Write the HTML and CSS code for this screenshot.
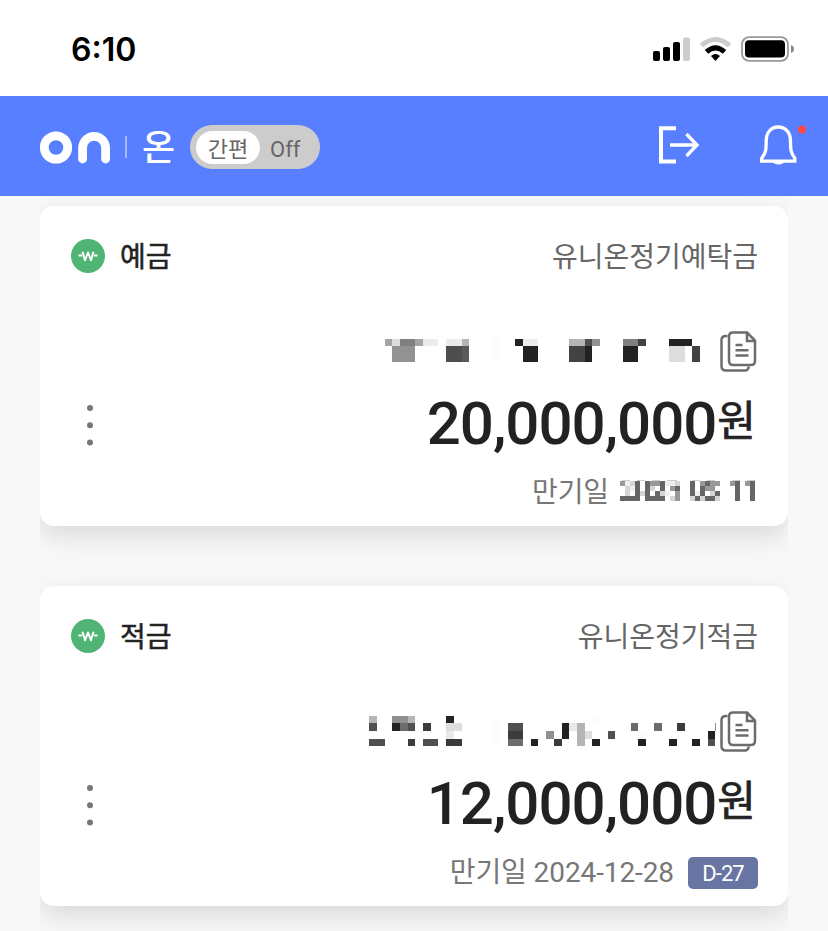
FILE: index.html
```
<!DOCTYPE html>
<html lang="ko">
<head>
  <meta charset="utf-8">
  <title>ON 온</title>
  <link rel="stylesheet" href="styles.css">
</head>
<body>

  <div class="status">
    <span class="time">6:10</span>
    <svg class="status-icons" width="144" height="30" viewBox="652 34 144 30">
      <rect x="653" y="51" width="7" height="10" rx="2"/>
      <rect x="663" y="47" width="7" height="14" rx="2"/>
      <rect x="673" y="42" width="7" height="19" rx="2"/>
      <rect x="683" y="37.500" width="7" height="23.500" rx="2" fill="#ccc"/>
      <g fill="none" stroke-width="5">
        <path d="M701.500 45.500q14-12 28 0" stroke="#ccc"/>
        <path d="M706.500 51.800q9-8 18 0" stroke="#000"/>
      </g>
      <path d="M711 56q4.500-4 9 0l-4.500 5z"/>
      <rect x="742" y="37.200" width="46" height="23.600" rx="7" fill="none" stroke="#999" stroke-width="1.800"/>
      <rect x="745" y="40.200" width="40" height="17.200" rx="4"/>
      <path d="M791 45q3 1.200 3 4t-3 4z" fill="#888"/>
    </svg>
  </div>

  <header class="appbar">
    <svg class="logo" width="70" height="34" viewBox="40 130 70 34">
      <g fill="none" stroke="#fff" stroke-width="8.800" stroke-linecap="round">
        <circle cx="56" cy="147.500" r="11.700"/>
        <path d="M82.600 159v-11a11.500 11.700 0 0 1 23 0v11"/>
      </g>
    </svg>
    <span class="divider"></span>
    <span class="brand">온</span>
    <div class="toggle">
      <span class="knob">간편</span>
      <span class="off">Off</span>
    </div>
    <svg class="actions" width="152" height="44" viewBox="656 123 152 44">
      <g fill="none" stroke="#fff">
        <path d="M676 128.200h-15v33.300h15" stroke-width="4"/>
        <path d="M670 145h26M686.500 134l10.500 11-10.500 11" stroke-width="3.300"/>
        <path d="M761.700 161.200v-3c4-5 4.500-8 4.500-17 0-9 5-14.200 12-14.200s12.300 5.200 12.300 14.200c0 9 .5 12 4.300 17v3z" stroke-width="3.300"/>
      </g>
      <path d="M772.500 161.500h12q-1.500 3-6 3t-6-3z" fill="#fff"/>
      <circle cx="802" cy="129.500" r="4" fill="#ff4646"/>
    </svg>
  </header>

  <main class="accounts">

    <div class="slot">
      <section class="card">
        <div class="row head">
          <svg class="won" width="34" height="34" viewBox="0 0 34 34">
            <circle cx="17" cy="17" r="17" fill="#50b574"/>
            <path d="M7.500 16.500h3.500M23 16.500h3.500M11.500 12.800l2.500 8.400L17 13.500l3 7.700 2.500-8.400" fill="none" stroke="#fff" stroke-width="2" stroke-linejoin="round"/>
          </svg>
          <h2>예금</h2>
          <span class="product">유니온정기예탁금</span>
        </div>
        <div class="row number">
          <svg class="mosaic" width="390" height="50" viewBox="368 326 390 50" shape-rendering="crispEdges">
            <path fill="#a5a5a5" d="M385 339h7v7h-7zM415 339h8v7h-8z"/>
            <path fill="#ddd" d="M392 339h8v7h-8zM669 346h16v16h-16z"/>
            <path fill="#808080" d="M400 339h15v7h-15zM623 339h15v7h-15z"/>
            <path fill="#ececec" d="M423 339h15v7h-15zM446 339h16v7h-16zM523 339h15v7h-15z"/>
            <path fill="#929292" d="M392 346h23v16h-23zM592 339h8v7h-8z"/>
            <path fill="#b5b5b5" d="M462 339h7v7h-7zM569 339h16v7h-16z"/>
            <path fill="#4e4e4e" d="M446 346h16v16h-16zM585 339h7v7h-7z"/>
            <path fill="#5a5a5a" d="M462 346h7v16h-7z"/>
            <path fill="#fcfcfc" d="M492 339h8v23h-8z"/>
            <path fill="#222" d="M515 339h8v7h-8zM523 346h15v16h-15zM585 346h7v16h-7zM623 346h15v16h-15zM669 339h23v7h-23z"/>
            <path fill="#424242" d="M569 346h16v16h-16zM638 339h8v7h-8zM692 346h8v16h-8z"/>
            <g fill="none" stroke="#6c6c6c" stroke-width="2.500" shape-rendering="auto">
              <path d="M727.500 336h-1.500q-4.500 0-4.500 4v26q0 4.500 4.500 4.500h19q3 0 4-4"/>
              <path d="M733 332.500h14l8 8v20q0 4.500-4 4.500h-18q-4 0-4-4.500v-24q0-4 4-4zM747 333v8h8M735.500 345h7M735.500 350.300h13M735.500 355.500h13"/>
            </g>
          </svg>
        </div>
        <div class="row money">
          <svg class="more" width="8" height="44" viewBox="0 0 8 44" fill="#777">
            <circle cx="4" cy="5" r="3"/><circle cx="4" cy="22.300" r="3"/><circle cx="4" cy="39.600" r="3"/>
          </svg>
          <span class="amount">20,000,000<small>원</small></span>
        </div>
        <div class="row due">
          <span class="date">만기일</span>
          <svg class="date-mosaic" width="138" height="24" viewBox="620 479 138 24" shape-rendering="crispEdges">
            <path fill="#ccc" d="M622 480h8v1h-8zM637 480h8v1h-8zM652 480h8v1h-8zM667 480h10v1h-10zM692 480h8v1h-8zM707 480h8v1h-8zM732 480h8v1h-8zM747 480h8v1h-8z"/>
            <path fill="#666" d="M635 481h5v15h-5zM645 481h5v20h-5zM660 481h5v10h-5zM655 491h5v5h-5zM620 496h20v5h-20zM650 496h15v5h-15zM675 486h5v5h-5zM690 481h5v15h-5zM705 481h5v5h-5zM700 486h5v10h-5zM695 496h5v5h-5zM705 496h10v5h-10zM715 491h5v5h-5zM735 481h5v20h-5zM750 481h5v20h-5z"/>
            <path fill="#999" d="M620 481h5v5h-5zM650 481h5v5h-5zM655 481h5v5h-5zM670 486h5v5h-5zM675 491h5v5h-5zM675 496h5v5h-5zM700 481h5v5h-5zM710 481h5v5h-5zM715 481h5v5h-5zM705 486h5v5h-5zM710 486h5v5h-5zM730 481h5v5h-5zM745 481h5v5h-5z"/>
            <path fill="#d5d5d5" d="M625 486h5v10h-5zM630 481h5v5h-5zM640 491h5v5h-5zM650 486h5v5h-5zM660 491h5v5h-5zM675 481h5v5h-5zM670 496h5v5h-5zM690 496h5v5h-5zM700 496h5v5h-5zM710 491h5v5h-5zM715 496h5v5h-5z"/>
            <path fill="#eee" d="M625 481h5v5h-5zM630 486h5v5h-5zM665 481h10v5h-10zM665 491h5v5h-5zM695 491h5v5h-5z"/>
          </svg>
        </div>
      </section>
    </div>

    <div class="slot">
      <section class="card">
        <div class="row head">
          <svg class="won" width="34" height="34" viewBox="0 0 34 34">
            <circle cx="17" cy="17" r="17" fill="#50b574"/>
            <path d="M7.500 16.500h3.500M23 16.500h3.500M11.500 12.800l2.500 8.400L17 13.500l3 7.700 2.500-8.400" fill="none" stroke="#fff" stroke-width="2" stroke-linejoin="round"/>
          </svg>
          <h2>적금</h2>
          <span class="product">유니온정기적금</span>
        </div>
        <div class="row number">
          <svg class="mosaic" width="390" height="50" viewBox="368 706 390 50" shape-rendering="crispEdges">
            <path fill="#b5b5b5" d="M369 716h8v7h-8zM408 716h7v7h-7zM577 723h8v23h-8z"/>
            <path fill="#909090" d="M392 716h16v7h-16zM546 731h8v8h-8zM715 723h1v8h-1z"/>
            <path fill="#505050" d="M369 723h8v8h-8zM408 723h7v8h-7zM369 739h16v7h-16zM423 739h15v7h-15zM508 723h15v8h-15zM608 731h7v8h-7zM708 739h7v7h-7z"/>
            <path fill="#6c6c6c" d="M400 723h8v8h-8zM508 739h15v7h-15zM631 723h7v8h-7zM654 723h8v8h-8z"/>
            <path fill="#222" d="M392 723h8v8h-8zM446 716h8v7h-8zM531 739h7v7h-7zM562 723h7v16h-7zM592 739h8v7h-8zM638 739h8v7h-8zM669 739h8v7h-8zM692 739h8v7h-8zM708 731h7v8h-7z"/>
            <path fill="#3b3b3b" d="M408 739h7v7h-7zM423 723h8v8h-8zM446 739h16v7h-16zM508 731h15v8h-15zM554 739h8v7h-8zM677 723h8v8h-8z"/>
            <path fill="#dedede" d="M446 723h16v8h-16zM585 731h7v8h-7z"/>
            <path fill="#e9e9e9" d="M446 731h8v8h-8zM569 723h8v8h-8z"/>
            <path fill="#fcfcfc" d="M492 723h8v23h-8zM562 739h7v7h-7zM592 716h8v7h-8zM638 731h8v8h-8z"/>
            <g fill="none" stroke="#6c6c6c" stroke-width="2.500" shape-rendering="auto">
              <path d="M727.500 716h-1.500q-4.500 0-4.500 4v26q0 4.500 4.500 4.500h19q3 0 4-4"/>
              <path d="M733 712.500h14l8 8v20q0 4.500-4 4.500h-18q-4 0-4-4.500v-24q0-4 4-4zM747 713v8h8M735.500 725h7M735.500 730.300h13M735.500 735.500h13"/>
            </g>
          </svg>
        </div>
        <div class="row money">
          <svg class="more" width="8" height="44" viewBox="0 0 8 44" fill="#777">
            <circle cx="4" cy="5" r="3"/><circle cx="4" cy="22.300" r="3"/><circle cx="4" cy="39.600" r="3"/>
          </svg>
          <span class="amount">12,000,000<small>원</small></span>
        </div>
        <div class="row due">
          <span class="date">만기일 2024-12-28</span>
          <span class="badge">D-27</span>
        </div>
      </section>
    </div>

  </main>

</body>
</html>
```
FILE: styles.css
```
*
{
  box-sizing: border-box;
}

body
{
  margin: 0;
  height: 931px;
  overflow: hidden;
  background-color: #f8f8f8;
  color: #222;
  font-family: Roboto, "Noto Sans CJK KR", sans-serif;
}

svg
{
  display: block;
  flex: none;
}

.status
{
  display: flex;
  justify-content: space-between;
  height: 95.500px;
  padding: 34px 32px 0 71px;
  background-color: #fff;
}

.time
{
  font: 600 32px/32px Inter, sans-serif;
  color: #000;
}

.appbar
{
  display: flex;
  align-items: center;
  height: 100px;
  padding: 3px 20px 0 40px;
  background-color: #587fff;
  color: #fff;
}

.divider
{
  width: 2px;
  height: 22px;
  margin: 0 15px;
  background-color: #a5b9ff;
}

.brand
{
  width: 35px;
  padding-top: 3px;
  font-size: 36px;
  font-weight: 500;
  line-height: 40px;
}

.toggle
{
  display: flex;
  align-items: center;
  width: 130px;
  height: 44px;
  margin-left: 13px;
  padding: 0 6px;
  border-radius: 22px;
  background-color: #ccc;
  color: #666;
  font-size: 22px;
}

.knob
{
  width: 64px;
  height: 33px;
  border-radius: 17px;
  background-color: #fff;
  line-height: 37px;
  text-align: center;
}

.off
{
  margin: 5px 0 0 10px;
  font-size: 22px;
}

.actions
{
  margin-left: auto;
  margin-top: -4px;
}

.accounts
{
  padding: 0 40px;
}

/* cuts the shadow off at the card's sides */
.slot
{
  height: 380px;
  padding-top: 10.500px;
  overflow: hidden;
}

.card
{
  height: 320px;
  padding: 30px 30px 0;
  border-radius: 14px;
  background-color: #fff;
  box-shadow: 0 10px 26px rgba(0, 0, 0, 0.120);
}

.row
{
  display: flex;
  align-items: center;
  justify-content: flex-end;
}

.head
{
  height: 40px;
}

.won
{
  margin-left: 1px;
}

.head h2
{
  margin: 0 auto 0 15px;
  padding-top: 3px;
  font-size: 28px;
  font-weight: 400;
  line-height: 40px;
  -webkit-text-stroke: 0.500px #222;
}

.product
{
  padding-top: 3px;
  color: #666;
  font-size: 28px;
  line-height: 40px;
}

.number
{
  height: 50px;
  margin-top: 50px;
}

.money
{
  height: 98px;
  padding-left: 16px;
  padding-right: 2px;
  justify-content: space-between;
}

.amount
{
  display: flex;
  align-items: baseline;
  font-size: 60px;
  font-weight: 500;
  line-height: 70px;
  letter-spacing: -1px;
}

.amount small
{
  margin-left: 1px;
  padding-bottom: 7px;
  font-size: 42px;
  font-weight: 400;
  line-height: 50px;
  letter-spacing: 0;
  transform: translateY(-8px);
  -webkit-text-stroke: 0.700px #222;
}

.due
{
  height: 38px;
  color: #777;
  font-size: 28px;
}

.date
{
  margin-top: -6px;
  letter-spacing: -0.100px;
}

.date-mosaic
{
  margin-top: -4px;
  margin-left: 11px;
}

.badge
{
  width: 70px;
  height: 32px;
  margin-left: 14px;
  border-radius: 5px;
  background-color: #6874a2;
  color: #fff;
  font-size: 22px;
  line-height: 34px;
  letter-spacing: -0.900px;
  text-align: center;
}
```
